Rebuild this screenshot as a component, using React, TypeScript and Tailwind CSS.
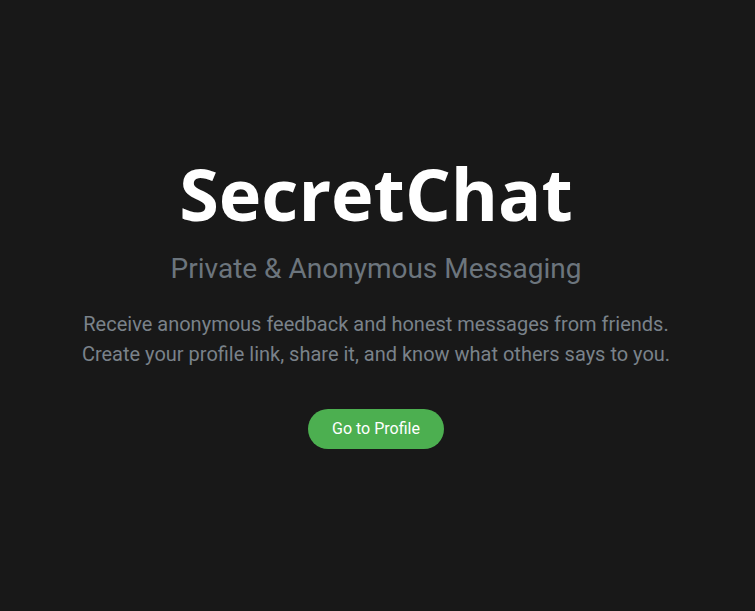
import React from "react";

const App = () => {
	return (
		<div className="flex min-h-screen flex-col items-center justify-center bg-[#181818] pb-[6px] pl-4 pr-[19px] text-center font-['Roboto',sans-serif]">
			{/* brand */}
			<h1 className="font-['Open_Sans',sans-serif] text-[72px] font-bold leading-none text-white">
				SecretChat
			</h1>
			<h2 className="mt-[22px] text-[28px] leading-[35px] text-[#6c757d]">
				Private &amp; Anonymous Messaging
			</h2>

			{/* intro */}
			<p className="mt-[23px] text-[20px] leading-[30px] text-[#7a828a]">
				Receive anonymous feedback and honest messages from friends.
				<br />
				Create your profile link, share it, and know what others says to you.
			</p>

			<button className="mt-[40px] h-10 rounded-full bg-[#4caf50] px-6 text-base text-white hover:bg-[#43a047]">
				Go to Profile
			</button>
		</div>
	);
};

export default App;
